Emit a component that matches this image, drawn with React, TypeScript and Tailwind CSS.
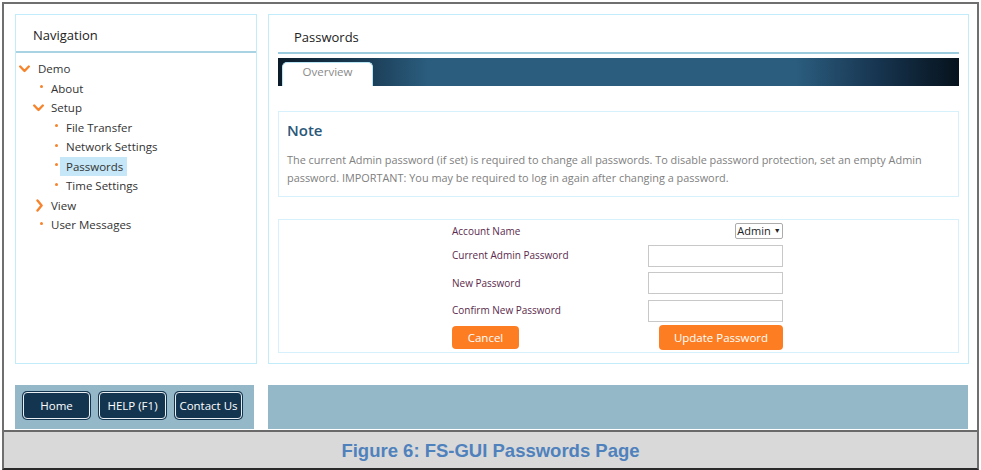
import React from "react";

const OS = { fontFamily: '"Open Sans", "Noto Sans", sans-serif' };

function ChevronDown() {
  return (
    <svg width="11" height="8" viewBox="0 0 11 8" className="block">
      <path d="M1.2 1.5 L5.5 6 L9.8 1.5" fill="none" stroke="#f5842c" strokeWidth="2.4" strokeLinecap="round" strokeLinejoin="round" />
    </svg>
  );
}

function ChevronRight() {
  return (
    <svg width="7" height="13" viewBox="0 0 7 13" className="block">
      <path d="M1.5 1.5 L5.6 6.5 L1.5 11.5" fill="none" stroke="#f5842c" strokeWidth="2.4" strokeLinecap="round" strokeLinejoin="round" />
    </svg>
  );
}

function Dot() {
  return <span className="block w-[3px] h-[3px] rounded-full bg-[#f5842c] -mt-[3px]" />;
}

type Kind = "down" | "right" | "dot";

const ROW_PAD: Record<string, string> = {
  "0-down": "pl-[3px]",
  "1-down": "pl-[17px]",
  "1-right": "pl-[20px]",
  "1-dot": "pl-[24px]",
  "2-dot": "pl-[39px]",
};

const ICON_W: Record<string, string> = {
  "0-down": "w-[19px]",
  "1-down": "w-[18px]",
  "1-right": "w-[15px]",
  "1-dot": "w-[11px]",
  "2-dot": "w-[11px]",
};

function TreeRow({
  level,
  kind,
  label,
  active = false,
}: {
  level: 0 | 1 | 2;
  kind: Kind;
  label: string;
  active?: boolean;
}) {
  const key = `${level}-${kind}`;
  return (
    <div className={`flex items-center h-[19.5px] ${ROW_PAD[key]}`}>
      <div className={`${ICON_W[key]} flex items-center justify-start shrink-0`}>
        {kind === "down" && <ChevronDown />}
        {kind === "right" && <ChevronRight />}
        {kind === "dot" && <Dot />}
      </div>
      <span
        className={`text-[11.5px] text-[#333] leading-[19px] ${active ? "bg-[#c5e7f7] pl-[6px] pr-[4px] -ml-[6px]" : ""}`}
      >
        {label}
      </span>
    </div>
  );
}

function NavButton({ label }: { label: string }) {
  return (
    <button
      className="w-[67px] h-[27px] rounded-[4px] bg-[#14354f] border-[1.5px] border-[#e9eff3] shadow-[0_0_0_1px_#14354f] text-white text-[11.5px] flex items-center justify-center"
      style={OS}
    >
      {label}
    </button>
  );
}

export default function App() {
  return (
    <div className="w-[981px] h-[470px] bg-white relative" style={OS}>
      <div className="absolute left-[2px] top-[2px] w-[977px] h-[468px] border-2 border-[#6f6f6f] border-b-[#2a2a2a] flex flex-col">
        {/* top area */}
        <div className="h-[426px] flex pl-[11px] pt-[10px] gap-[11px] bg-white">
          {/* left column */}
          <div className="w-[242px] flex flex-col">
            <div className="h-[350px] border border-[#c3ecfa] flex flex-col">
              <div className="h-[36px] flex items-center pl-[17px] pt-[5px] text-[13px] text-[#222]">
                Navigation
              </div>
              <div className="h-[2px] bg-[#a9d3e3]" />
              <div className="pt-[6px]">
                <TreeRow level={0} kind="down" label="Demo" />
                <TreeRow level={1} kind="dot" label="About" />
                <TreeRow level={1} kind="down" label="Setup" />
                <TreeRow level={2} kind="dot" label="File Transfer" />
                <TreeRow level={2} kind="dot" label="Network Settings" />
                <TreeRow level={2} kind="dot" label="Passwords" active />
                <TreeRow level={2} kind="dot" label="Time Settings" />
                <TreeRow level={1} kind="right" label="View" />
                <TreeRow level={1} kind="dot" label="User Messages" />
              </div>
            </div>
            <div className="mt-[21px] w-[239px] h-[44px] bg-[#94b8c8] flex items-center gap-[9px] pl-[8px] pb-[3px]">
              <NavButton label="Home" />
              <NavButton label="HELP (F1)" />
              <NavButton label="Contact Us" />
            </div>
          </div>

          {/* right column */}
          <div className="w-[701px] flex flex-col">
            <div className="h-[350px] border border-[#c3ecfa] px-[9px] flex flex-col">
              <div className="h-[37px] flex items-center pl-[16px] pt-[8px] text-[13px] text-[#222]">
                Passwords
              </div>
              <div className="h-[2px] bg-[#9ccbdd]" />
              <div className="mt-[4px] h-[28px] bg-[linear-gradient(to_right,#0b1b29_0%,#1c405a_14%,#2b5d7e_22%,#2b5d7e_76%,#173550_88%,#06121c_100%)] flex items-end pl-[4px]">
                <div className="w-[91px] h-[24px] bg-white rounded-t-[5px] border border-b-0 border-[#b9e6f5] flex items-start justify-center text-[11.5px] text-[#8a8a8a]">
                  Overview
                </div>
              </div>

              {/* Note */}
              <div className="mt-[25px] h-[86px] border border-[#d6f1fb] pl-[8px] pt-[7px]">
                <div className="text-[15px] font-semibold text-[#2b587a] leading-[22px]">Note</div>
                <p className="mt-[10px] text-[10.9px] leading-[18px] text-[#808080] pr-[10px]">
                  The current Admin password (if set) is required to change all passwords. To disable password protection, set an empty Admin password. IMPORTANT: You may be required to log in again after changing a password.
                </p>
              </div>

              {/* Form */}
              <div className="mt-[22px] h-[134px] border border-[#d6f1fb] flex justify-center pt-[3px]">
                <div className="grid grid-cols-[196px_135px] text-[10px] text-[#5b2a4d] -ml-[2px]">
                  <div className="h-[16px] flex items-center">Account Name</div>
                  <div className="h-[16px] flex justify-end">
                    <div className="h-[16px] w-[48px] border border-[#acacac] rounded-[2px] flex items-center justify-center text-[11px] text-[#222] gap-[3px]">
                      Admin <span className="text-[7px]">▼</span>
                    </div>
                  </div>

                  <div className="mt-[4px] h-[22px] flex items-center">Current Admin Password</div>
                  <div className="mt-[4px] h-[22px] border border-[#c8c8c8]" />

                  <div className="mt-[4px] h-[22px] flex items-center">New Password</div>
                  <div className="mt-[4px] h-[22px] border border-[#c8c8c8]" />

                  <div className="mt-[4px] h-[22px] flex items-center">Confirm New Password</div>
                  <div className="mt-[4px] h-[22px] border border-[#c8c8c8]" />

                  <div className="mt-[2px] h-[25px] flex items-center">
                    <button className="w-[67px] h-[23px] rounded-[4px] bg-[#fd7e22] text-white text-[11.5px]" style={OS}>
                      Cancel
                    </button>
                  </div>
                  <div className="mt-[2px] h-[25px] flex justify-end">
                    <button className="w-[124px] h-[25px] rounded-[4px] bg-[#fd7e22] text-white text-[11.5px]" style={OS}>
                      Update Password
                    </button>
                  </div>
                </div>
              </div>
            </div>
            <div className="mt-[21px] w-[700px] h-[44px] bg-[#94b8c8]" />
          </div>
        </div>
        {/* separator */}
        <div className="h-[2px] bg-[#6a6a6a]" />
        {/* caption */}
        <div className="flex-1 bg-[#d9d9d9] flex items-center justify-center">
          <span
            className="text-[18.5px] font-bold text-[#4f81bd] pt-[2px]"
            style={{ fontFamily: '"Liberation Sans", Arial, sans-serif' }}
          >
            Figure 6: FS-GUI Passwords Page
          </span>
        </div>
      </div>
    </div>
  );
}
